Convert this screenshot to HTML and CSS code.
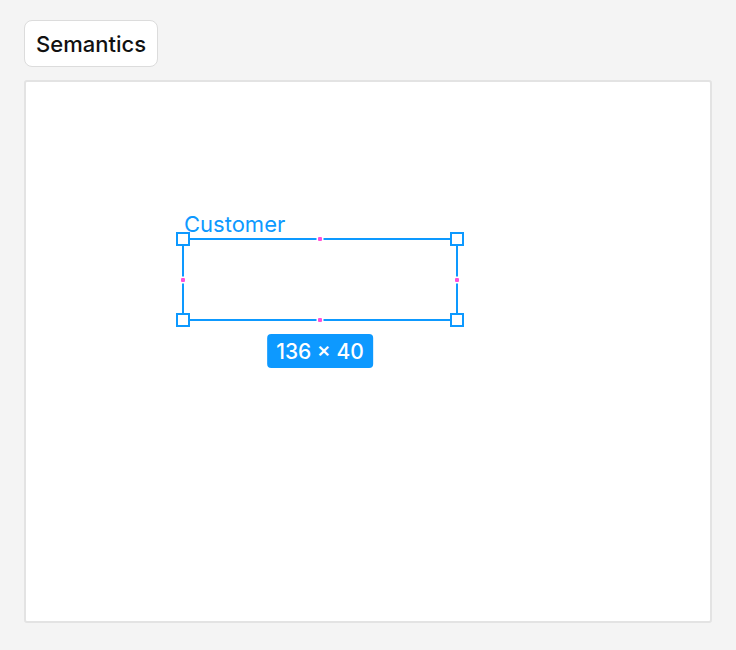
FILE: index.html
```html
<!DOCTYPE html>
<html>
<head>
<meta charset="utf-8">
<link rel="stylesheet" href="styles.css">
</head>
<body>
<div class="page">
  <div class="toolbar"><button class="btn">Semantics</button></div>
  <div class="canvas">
    <div class="sel">
      <span class="name">Customer</span>
      <span class="handle h-tl"></span>
      <span class="handle h-tr"></span>
      <span class="handle h-bl"></span>
      <span class="handle h-br"></span>
      <span class="dot d-t"></span>
      <span class="dot d-l"></span>
      <span class="dot d-r"></span>
      <span class="dot d-b"></span>
      <span class="size">136 × 40</span>
    </div>
  </div>
</div>
</body>
</html>
```
FILE: styles.css
```css
* { box-sizing: border-box; }
html, body { margin: 0; padding: 0; background: #f4f4f4; }
body { font-family: Inter, "Noto Sans", sans-serif; }
.page { padding: 20px 24px 0 24px; display: flex; flex-direction: column; gap: 13px; }
.toolbar { display: flex; }
.btn {
  height: 47px;
  padding: 0 11px;
  background: #fff;
  border: 1px solid #dcdcdc;
  border-radius: 8px;
  font-family: Inter, "Noto Sans", sans-serif;
  font-size: 22px;
  font-weight: 500;
  color: #111;
  display: flex;
  align-items: center;
}
.canvas {
  position: relative;
  width: 688px;
  height: 543px;
  background: #fff;
  border: 2px solid #e3e3e3;
  border-radius: 3px;
}
.sel {
  position: absolute;
  left: 156px;
  top: 156px;
  width: 276px;
  height: 83px;
  border: 2px solid #0d99ff;
}
.name {
  position: absolute;
  left: 0;
  top: -27px;
  font-size: 22px;
  line-height: 22px;
  color: #0d99ff;
  white-space: nowrap;
}
.handle {
  position: absolute;
  width: 14px;
  height: 14px;
  background: #fff;
  border: 2px solid #0d99ff;
  transform: translate(-50%, -50%);
}
.h-tl { left: -1px; top: -1px; }
.h-tr { left: 273px; top: -1px; }
.h-bl { left: -1px; top: 80px; }
.h-br { left: 273px; top: 80px; }
.dot {
  position: absolute;
  width: 4px;
  height: 4px;
  background: #ff4fd8;
  border-radius: 1px;
  box-shadow: 0 0 0 1.5px #fff;
  transform: translate(-50%, -50%);
}
.d-t { left: 136px; top: -1px; }
.d-l { left: -1px; top: 40px; }
.d-r { left: 273px; top: 40px; }
.d-b { left: 136px; top: 80px; }
.size {
  position: absolute;
  left: 50%;
  top: 94px;
  transform: translateX(-50%);
  height: 34px;
  padding: 0 9px;
  display: flex;
  align-items: center;
  background: #0d99ff;
  color: #fff;
  border-radius: 4px;
  font-size: 21px;
  font-weight: 500;
  white-space: nowrap;
}
```
